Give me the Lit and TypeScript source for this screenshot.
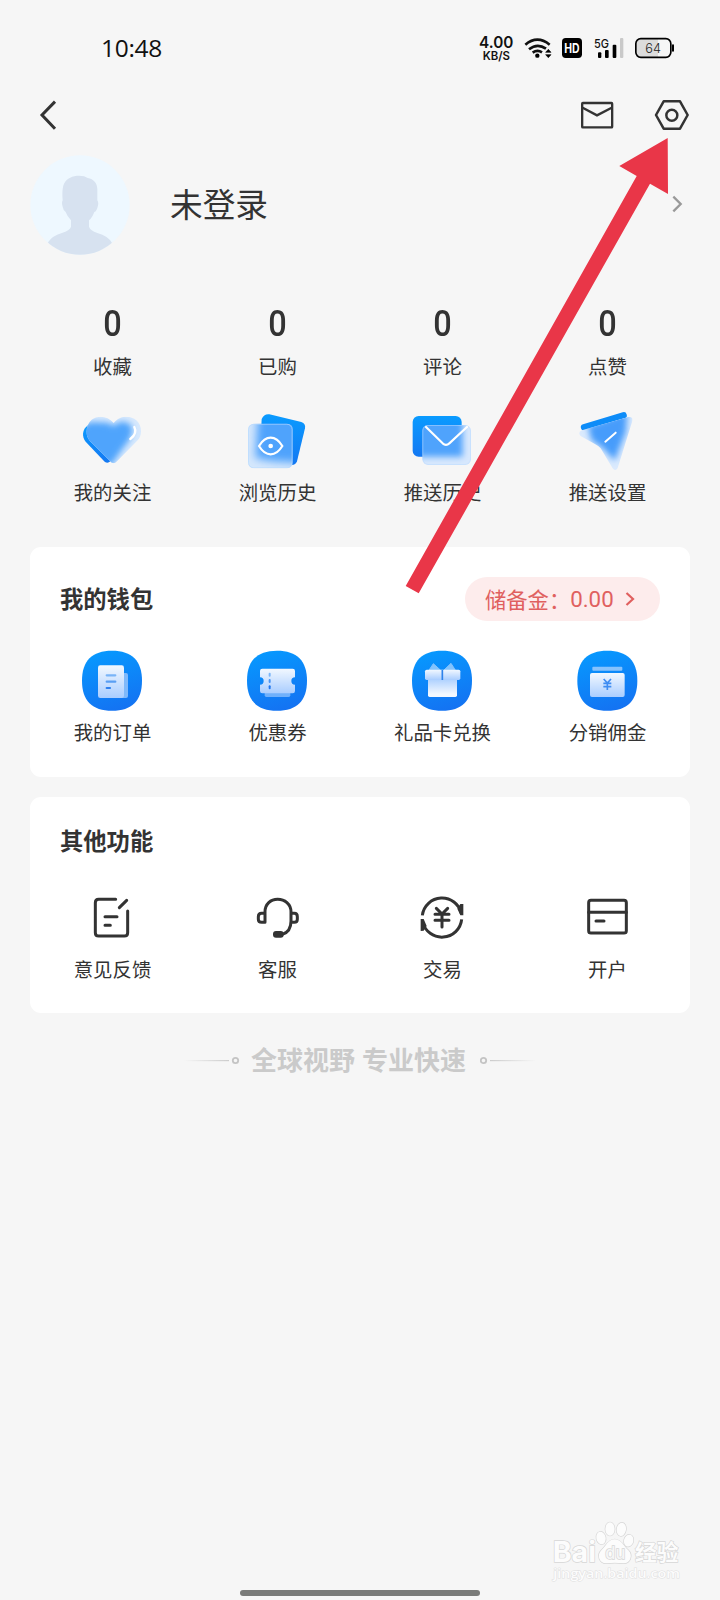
import { LitElement, html, svg, css } from "lit";
import { customElement } from "lit/decorators.js";

type Icon = { box: string; art: unknown };

const squircle = (x: number, y: number) =>
  svg`<path transform="translate(${x} ${y})" fill="url(#sq)" d="M-90 0C-90-60-60-90 0-90S90-60 90 0 60 90 0 90-90 60-90 0Z"/>`;

const badgeDefs = svg`<defs>
  <linearGradient id="sq" x1="0.35" y1="0" x2="0.65" y2="1"><stop offset="0" stop-color="#0798fe"/><stop offset="1" stop-color="#1472f2"/></linearGradient>
  <linearGradient id="pale" x1="0" y1="0" x2="0" y2="1"><stop offset="0" stop-color="#f2f8ff"/><stop offset="1" stop-color="#a9cdff"/></linearGradient>
</defs>`;

const ICONS: Record<string, Icon> = {
  follow: {
    box: "60 354 195 192",
    art: svg`<defs>
      <clipPath id="hc"><path d="M160 520Q154 518 149 512L89 452C74 435 77 405 95 389C114 375 142 377 161 399C180 376 211 376 229 391C247 407 247 436 233 451L171 514Q166 520 160 520Z"/></clipPath>
      <filter id="hb" x="-30%" y="-30%" width="160%" height="160%"><feGaussianBlur stdDeviation="10"/></filter>
      <linearGradient id="hg" x1="0" y1="0" x2="0" y2="1"><stop offset="0" stop-color="#0a9bff"/><stop offset="1" stop-color="#1478f2"/></linearGradient></defs>
      <path fill="url(#hg)" d="M84 406C66 418 65 441 77 455L134 515Q143 522 151 514L170 490Z"/>
      <g clip-path="url(#hc)"><rect x="60" y="370" width="200" height="160" fill="#d8e9fd"/>
      <path filter="url(#hb)" fill="#50a4fc" d="M56 412L92 396L145 398L160 408L178 396Q210 392 217 416Q218 442 192 470L150 530L60 460Z"/></g>
      <path d="M223 411Q233 430 211 447" fill="none" stroke="#fff" stroke-width="7" stroke-linecap="round"/>`,
  },
  history: {
    box: "555 354 195 192",
    art: svg`<defs><clipPath id="ec"><rect x="564" y="401" width="134" height="134" rx="17"/></clipPath>
      <filter id="eb" x="-30%" y="-30%" width="160%" height="160%"><feGaussianBlur stdDeviation="12"/></filter>
      <linearGradient id="eg" x1="0" y1="0" x2="0" y2="1"><stop offset="0" stop-color="#0a9bff"/><stop offset="1" stop-color="#1478f2"/></linearGradient></defs>
      <path fill="url(#eg)" d="M628 373L724 396Q738 401 735 415L711 514Q707 526 693 525L600 500L605 387Q612 371 628 373Z"/>
      <g clip-path="url(#ec)"><rect x="564" y="401" width="134" height="134" fill="#d5e7fc"/>
      <path filter="url(#eb)" fill="#4fa3fc" d="M594 370H740V520L640 514L586 504Z"/>
      <rect x="565.500" y="402.500" width="131" height="131" rx="16" fill="none" stroke="#b9dbff" stroke-opacity=".7" stroke-width="3"/></g>
      <path d="M597 468Q612 443 632 443T667 468Q652 493 632 493T597 468Z" fill="none" stroke="#fff" stroke-width="6.500"/><circle cx="632" cy="468" r="7" fill="#fff"/>`,
  },
  push: {
    box: "90 354 195 192",
    art: svg`<defs><clipPath id="mc"><rect x="127" y="405" width="146" height="120" rx="17"/></clipPath>
      <filter id="mb" x="-30%" y="-30%" width="160%" height="160%"><feGaussianBlur stdDeviation="10"/></filter>
      <linearGradient id="mg" x1="0" y1="0" x2="0" y2="1"><stop offset="0" stop-color="#0a9bff"/><stop offset="1" stop-color="#1478f2"/></linearGradient></defs>
      <rect x="98" y="378" width="147" height="122" rx="18" fill="url(#mg)"/>
      <g clip-path="url(#mc)"><rect x="127" y="405" width="146" height="120" fill="#d8e8fd"/>
      <rect filter="url(#mb)" x="70" y="370" width="178" height="130" fill="#4fa3fc"/>
      <rect x="128.500" y="406.500" width="143" height="117" rx="16" fill="none" stroke="#b9dbff" stroke-opacity=".5" stroke-width="3"/></g>
      <path d="M138 411L188 460Q198 469 208 460L261 411" fill="none" stroke="#fff" stroke-width="6.500" stroke-linecap="round"/>`,
  },
  pushSetting: {
    box: "585 354 195 192",
    art: svg`<defs><clipPath id="pc"><path d="M606 421L745 381Q760 379 757 393L713 534Q706 546 698 535L662 475Q655 468 646 463L602 438Q592 427 606 421Z"/></clipPath>
      <filter id="pb" x="-30%" y="-30%" width="160%" height="160%"><feGaussianBlur stdDeviation="10"/></filter></defs>
      <path d="M612 412L731 376" stroke="#0d8cf8" stroke-width="19" stroke-linecap="round"/>
      <g clip-path="url(#pc)"><rect x="590" y="370" width="180" height="180" fill="#dbeafd"/>
      <path filter="url(#pb)" fill="#469cfb" d="M624 408L742 366L738 425L704 512L668 474L634 450Z"/></g>
      <path d="M676 455L707 428" stroke="#fff" stroke-width="6" stroke-linecap="round"/>`,
  },
  order: {
    box: "150 327 195 192",
    art: svg`${badgeDefs}${squircle(246, 422)}
      <rect x="262" y="399" width="32" height="75" rx="6" fill="#7fb9fb"/>
      <rect x="204" y="376" width="78" height="98" rx="7" fill="url(#pale)"/>
      <g stroke-width="6.500" stroke-linecap="round"><path d="M230 406H256" stroke="#79b4f8"/><path d="M230 425H256" stroke="#5a9ff4"/><path d="M230 444H240" stroke="#2f80ee"/></g>`,
  },
  coupon: {
    box: "645 327 195 192",
    art: svg`${badgeDefs}${squircle(741, 422)}
      <rect x="704" y="440" width="77" height="31" rx="5" fill="#6fb0fb"/>
      <path fill="url(#pale)" d="M697 386H788Q795 386 795 393V412A11 11 0 0 0 795 434V453Q795 460 788 460H697Q690 460 690 453V434A11 11 0 0 0 690 412V393Q690 386 697 386Z"/>
      <g stroke-width="6" stroke-linecap="round"><path d="M719 401V407" stroke="#7ab5f8"/><path d="M719 420V426" stroke="#4b95f3"/><path d="M719 439V445" stroke="#2176ee"/></g>`,
  },
  gift: {
    box: "120 327 195 192",
    art: svg`${badgeDefs}${squircle(216, 422)}
      <path d="M176 392L190 371L211 390ZM222 390L243 370L257 392Z" fill="#83c3fd" stroke="#83c3fd" stroke-width="3" stroke-linejoin="round"/>
      <linearGradient id="gb" x1="0" y1="0" x2="0" y2="1"><stop offset="0" stop-color="#a5ccff"/><stop offset=".85" stop-color="#f3f8ff"/></linearGradient>
      <rect x="174" y="412" width="87" height="59" rx="5" fill="url(#gb)"/>
      <rect x="165" y="389" width="106" height="31" rx="5" fill="url(#pale)"/>
      <path d="M217 390V420" stroke="#2e82ea" stroke-width="5"/>`,
  },
  commission: {
    box: "615 327 195 192",
    art: svg`${badgeDefs}${squircle(712, 422)}
      <rect x="667" y="380" width="90" height="12" rx="3" fill="#86c2fd"/>
      <rect x="660" y="399" width="104" height="72" rx="6" fill="url(#pale)"/>
      <path d="M701 417L712 429L723 417M700 430H724M700 440H724M712 430V450" fill="none" stroke="#3f8df2" stroke-width="5"/>`,
  },
  feedback: {
    box: "150 285 195 192",
    art: svg`<g fill="none" stroke="#333" stroke-width="9" stroke-linecap="round" stroke-linejoin="round"><path d="M257 328H206Q196 328 196 338V428Q196 438 206 438H283Q293 438 293 428V363M268 353L290 331M225 380H261M225 406H241"/></g>`,
  },
  service: {
    box: "645 285 195 192",
    art: svg`<g fill="none" stroke="#333" stroke-width="9" stroke-linecap="round" stroke-linejoin="round"><path d="M705 397V366C705 342 722 328 743 328S783 342 783 366V393C783 415 774 428 757 433M705 370H695Q685 370 685 380V388Q685 397 695 397H705M785 370H793Q802 370 802 380V388Q802 397 793 397H785"/></g><rect x="729" y="423" width="32" height="20" rx="9" fill="#333"/>`,
  },
  trade: {
    box: "120 285 195 192",
    art: svg`<g fill="none" stroke="#333" stroke-width="9"><path d="M157 376A59.500 59.500 0 0 1 274 370M275 388A59.500 59.500 0 0 1 158 396"/><path stroke-linecap="round" d="M199 355L216 372L233 355M195 373H237M195 391H237M216 373V411"/></g>
      <path d="M280 342L271 342L262 356L271 376H280ZM152 387V423L161 422L170 408L161 387Z" fill="#333"/>`,
  },
  account: {
    box: "615 285 195 192",
    art: svg`<g fill="none" stroke="#333" stroke-width="9" stroke-linecap="round"><rect x="656" y="331" width="113" height="98" rx="7"/><path d="M656 367H769M678 393H702"/></g>`,
  },
};

@customElement("icon-cell")
class IconCell extends LitElement {
  static properties = { icon: {}, label: {} };
  declare icon: string;
  declare label: string;
  static styles = css`
    :host { display: flex; flex-direction: column; align-items: center; }
    .icon { width: 65px; height: 64px; display: block; }
    .label { height: var(--label-h, 42px); display: flex; align-items: center; font-size: 19.4px; color: #333; white-space: nowrap; box-sizing: border-box; padding-bottom: 3px; }
  `;
  render() {
    const i = ICONS[this.icon];
    return html`<svg class="icon" viewBox=${i.box}>${i.art}</svg><div class="label">${this.label}</div>`;
  }
}

@customElement("app-root")
class AppRoot extends LitElement {
  static styles = css`
    :host { display: block; position: relative; width: 720px; height: 1600px; overflow: hidden; background: #f6f6f6; color: #333;
      font-family: "Noto Sans CJK SC", sans-serif; }
    * { box-sizing: border-box; }
    svg { display: block; }
    .status { height: 80px; padding: 15px 38px 0 101px; display: flex; align-items: center; justify-content: space-between; }
    .time { font-family: "Open Sans", sans-serif; font-size: 24.5px; line-height: 32px; color: #111; letter-spacing: -0.3px; }
    .tray { width: 205px; height: 36px; margin-top: 5px; font-family: Inter, sans-serif; }
    .header { height: 70px; padding: 0 28px 0 30px; display: flex; align-items: center; gap: 35px; }
    .nav { width: 40px; height: 40px; }
    .back { margin-right: auto; }
    .profile { height: 110px; padding: 0 28px 0 30px; display: flex; align-items: center; }
    .avatar { width: 100px; height: 100px; }
    .name { margin-left: 40px; font-size: 32.7px; line-height: 48px; padding-bottom: 5px; margin-right: auto; }
    .more { width: 30px; height: 30px; margin-bottom: 2px; }
    .stats { margin: 0 30px; padding-top: 40px; height: 287px; }
    .grid { display: grid; grid-template-columns: repeat(4, 1fr); }
    .stat { display: flex; flex-direction: column; align-items: center; }
    .num { height: 46px; padding-top: 1px; font: 500 37px/46px Roboto, sans-serif; transform: scaleX(.88); }
    .cap { height: 42px; display: flex; align-items: center; font-size: 19.4px; padding-bottom: 3px; }
    .links { margin-top: 20px; }
    .card { margin: 0 30px; background: #fff; border-radius: 11px; padding: 30px 0 0; }
    .wallet { height: 230px; }
    .others { height: 216px; margin-top: 20px; }
    .head { display: flex; align-items: center; justify-content: space-between; height: 44px; padding: 0 30px; margin-bottom: 28px; }
    .others .head { height: 29px; margin-bottom: 29px; }
    .title { font-size: 23.3px; font-weight: 700; line-height: 29px; padding-bottom: 2px; }
    .wallet icon-cell { --label-h: 40px; }
    .pill { width: 195px; height: 44px; border-radius: 22px; background: #fdecec; color: #e0605f; display: flex; align-items: center; padding-left: 20px; font-size: 21.3px; white-space: nowrap; }
    .fund { padding-bottom: 2px; }
    .amount { font-family: Roboto, sans-serif; font-weight: 400; font-size: 22.3px; }
    .go { width: 16px; height: 18px; margin-left: 8px; }
    .slogan { margin-top: 27px; height: 40px; display: flex; align-items: center; justify-content: center; color: #cacaca; font-size: 26px; font-weight: 700; white-space: nowrap; }
    .rule { width: 56px; height: 12px; }
    .words { margin: 0 14px 0 11px; padding-bottom: 4px; word-spacing: 1px; }
    .arrow, .mark { position: absolute; pointer-events: none; }
    .arrow { left: 400px; top: 130px; width: 280px; height: 470px; }
    .mark { left: 530px; top: 1500px; width: 190px; height: 100px; }
    .handle { position: absolute; left: 240px; top: 1590px; width: 240px; height: 6px; border-radius: 3px; background: #7a7b79; }
  `;

  render() {
    return html`
      <div class="status">
        <div class="time">10:48</div>
        <svg class="tray" viewBox="51 36 615 108">
          <g font-weight="600" fill="#111"><text x="57" y="84" font-size="47" textLength="103" lengthAdjust="spacingAndGlyphs">4.00</text>
          <text x="68" y="120" font-size="36" textLength="82" lengthAdjust="spacingAndGlyphs">KB/S</text></g>
          <g fill="none" stroke="#111" stroke-width="8"><path d="M196 74Q232 44 269 74M207 88Q232 68 258 86M218 98Q232 88 246 97"/></g>
          <circle cx="232" cy="107" r="6.500"/><path d="M257 97L265 88L273 97ZM257 104L265 113L273 104Z" stroke="#111" stroke-width="2"/>
          <rect x="306" y="54" width="60" height="60" rx="11"/><text x="313" y="98" font-size="38" font-weight="700" fill="#fff" textLength="46" lengthAdjust="spacingAndGlyphs">HD</text>
          <text x="402" y="83" font-size="36" font-weight="500" fill="#111" textLength="45" lengthAdjust="spacingAndGlyphs">5G</text>
          <rect x="414" y="97" width="10" height="17" rx="3"/><rect x="435" y="90" width="11" height="24" rx="3"/><rect x="458" y="74" width="11" height="40" rx="3"/><rect x="480" y="54" width="10" height="60" rx="3" fill="#c9c9c9"/>
          <path d="M542 57H594V111H542Q529 111 529 98V70Q529 57 542 57Z" fill="#dcdcdc"/>
          <rect x="527.500" y="56" width="105" height="56" rx="15" fill="none" stroke="#000" stroke-width="5"/><rect x="636" y="73" width="6" height="22" rx="3"/>
          <text x="556" y="98" font-size="39" font-weight="300" fill="#222" textLength="47" lengthAdjust="spacingAndGlyphs">64</text>
        </svg>
      </div>
      <div class="header">
        <svg class="nav back" viewBox="30 15 120 120" fill="none" stroke="#333" stroke-width="9"><path d="M105 35L66 75L105 116"/></svg>
        <svg class="nav" viewBox="351 225 120 120" fill="none" stroke="#333" stroke-width="7"><rect x="366.500" y="249" width="90" height="73" rx="2"/><path d="M368 263L411 286L455 263"/></svg>
        <svg class="nav" viewBox="576 225 120 120" fill="none" stroke="#333" stroke-width="7.500" stroke-linejoin="round"><path d="M611 244H660L683 285L660 326H611L588 285Z"/><circle cx="635.500" cy="285.500" r="16.500"/></svg>
      </div>
      <div class="profile">
        <svg class="avatar" viewBox="30 195 300 300">
          <clipPath id="av"><circle cx="180" cy="345" r="149"/></clipPath>
          <circle cx="180" cy="345" r="149" fill="#eef8ff"/>
          <path clip-path="url(#av)" fill="#d7e2f0" d="M128 331Q125 297 132 281C141 264 157 257 178 257Q194 257 203 264C221 267 232 280 232 297V331Q237 338 233 350Q230 363 223 366Q216 384 207 391V410Q211 422 232 429Q265 438 276 459L260 500H100L84 457Q96 437 128 428Q150 420 153 410V391Q142 380 137 366Q130 362 128 350Q124 337 128 331Z"/>
        </svg>
        <div class="name">未登录</div>
        <svg class="more" viewBox="606 508 90 90" fill="none" stroke="#999" stroke-width="7"><path d="M640 531L662 553L640 575"/></svg>
      </div>
      <div class="stats">
        <div class="grid">
          ${["收藏", "已购", "评论", "点赞"].map((t) => html`<div class="stat"><div class="num">0</div><div class="cap">${t}</div></div>`)}
        </div>
        <div class="grid links">
          <icon-cell icon="follow" label="我的关注"></icon-cell>
          <icon-cell icon="history" label="浏览历史"></icon-cell>
          <icon-cell icon="push" label="推送历史"></icon-cell>
          <icon-cell icon="pushSetting" label="推送设置"></icon-cell>
        </div>
      </div>
      <div class="card wallet">
        <div class="head">
          <div class="title">我的钱包</div>
          <div class="pill"><span class="fund">储备金：</span><span class="amount">0.00</span>
            <svg class="go" viewBox="0 0 16 18" fill="none" stroke="#e0605f" stroke-width="2.200"><path d="M4.500 3L11 9L4.500 15"/></svg></div>
        </div>
        <div class="grid">
          <icon-cell icon="order" label="我的订单"></icon-cell>
          <icon-cell icon="coupon" label="优惠券"></icon-cell>
          <icon-cell icon="gift" label="礼品卡兑换"></icon-cell>
          <icon-cell icon="commission" label="分销佣金"></icon-cell>
        </div>
      </div>
      <div class="card others">
        <div class="head"><div class="title">其他功能</div></div>
        <div class="grid">
          <icon-cell icon="feedback" label="意见反馈"></icon-cell>
          <icon-cell icon="service" label="客服"></icon-cell>
          <icon-cell icon="trade" label="交易"></icon-cell>
          <icon-cell icon="account" label="开户"></icon-cell>
        </div>
      </div>
      <div class="slogan">
        <svg class="rule" viewBox="0 0 56 12"><defs><linearGradient id="fl"><stop offset="0" stop-color="#ccc" stop-opacity="0"/><stop offset="1" stop-color="#ccc"/></linearGradient></defs><rect y="6" width="45" height="1.200" fill="url(#fl)"/><circle cx="51.500" cy="6.500" r="2.700" fill="none" stroke="#c4c4c4" stroke-width="1.800"/></svg>
        <span class="words">全球视野 专业快速</span>
        <svg class="rule" viewBox="0 0 56 12"><defs><linearGradient id="fr"><stop offset="0" stop-color="#ccc"/><stop offset="1" stop-color="#ccc" stop-opacity="0"/></linearGradient></defs><rect x="10" y="6" width="46" height="1.200" fill="url(#fr)"/><circle cx="3.500" cy="6.500" r="2.700" fill="none" stroke="#c4c4c4" stroke-width="1.800"/></svg>
      </div>
      <svg class="arrow" viewBox="400 130 280 470"><path fill="#e93648" d="M667.700 138L668 194L650 183.700L418.700 593.300L405.700 586L636.700 176L619.300 166Z"/></svg>
      <svg class="mark" viewBox="0 0 570 300" fill="#fcfcfc" stroke="#d6d6d6" stroke-width="4" font-family="Inter" font-weight="700" paint-order="stroke">
        <text x="68" y="187" font-size="84" textLength="130" lengthAdjust="spacingAndGlyphs">Bai</text>
        <path d="M254 118C274 118 282 140 295 151C310 166 301 191 280 190Q254 187 230 190C208 191 199 166 214 151C227 140 234 118 254 118Z"/>
        <ellipse cx="213" cy="114" rx="14" ry="19" transform="rotate(-12 213 114)"/><ellipse cx="240" cy="87" rx="14" ry="20"/><ellipse cx="274" cy="88" rx="14" ry="20" transform="rotate(8 274 88)"/><ellipse cx="296" cy="122" rx="14" ry="18" transform="rotate(14 296 122)"/>
        <text x="226" y="178" font-size="50" font-weight="500" fill="#f6f6f6" textLength="60" lengthAdjust="spacingAndGlyphs">du</text>
        <text x="315" y="180" font-size="65" font-family="Noto Sans CJK SC" textLength="130">经验</text>
        <text x="70" y="234" font-size="40" font-family="Open Sans" font-weight="600" stroke-width="3" stroke="#dfdfdf" textLength="380" lengthAdjust="spacingAndGlyphs">jingyan.baidu.com</text>
      </svg>
      <div class="handle"></div>
    `;
  }
}
